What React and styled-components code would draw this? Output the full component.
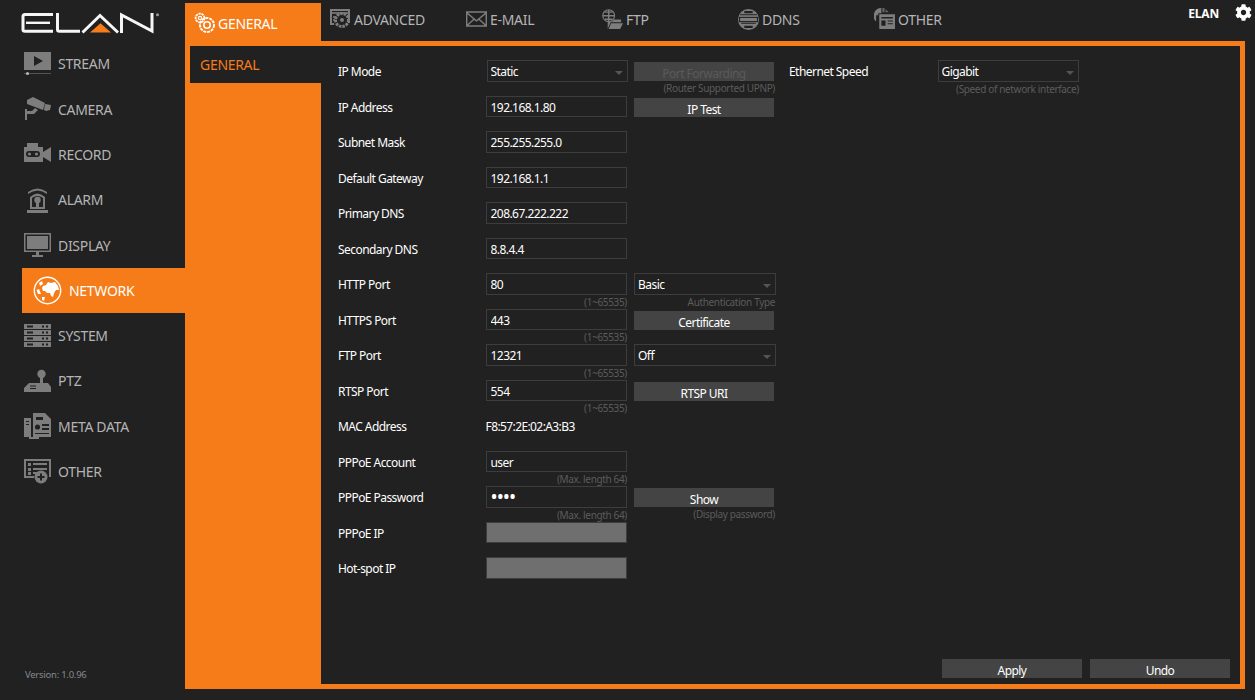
import React from 'react'
import styled, { createGlobalStyle } from 'styled-components'
import { FaCog } from 'react-icons/fa'

const ORANGE = '#f57c18'
const DARK = '#212121'
const FONT = '"Noto Sans", "Open Sans", sans-serif'

const GlobalStyle = createGlobalStyle`
    html, body {
        margin: 0;
        height: 100%;
        background: ${DARK};
        font-family: ${FONT};
    }
    * {
        box-sizing: border-box;
    }
`

const Page = styled.div`
    display: flex;
    width: 1255px;
    height: 700px;
    overflow: hidden;
    background: ${DARK};
`

const Sidebar = styled.aside`
    display: flex;
    flex-direction: column;
    width: 185px;
    flex-shrink: 0;
`

const LogoBox = styled.div`
    height: 41.2px;
    padding: 11px 0 0 21px;
`

const NavItem = styled.div`
    display: flex;
    align-items: center;
    gap: 7px;
    height: 45.3px;
    margin-left: 22px;
    padding-left: ${props => props.$active ? '11px' : '2px'};
    background: ${props => props.$active ? ORANGE : 'transparent'};
    color: ${props => props.$active ? '#fff' : '#b4b4b4'};
    font-size: 14px;
    letter-spacing: -0.3px;
    white-space: nowrap;
`

const Version = styled.div`
    margin-top: auto;
    padding: 0 0 19px 25px;
    color: #85898e;
    font-size: 9.5px;
    letter-spacing: -0.25px;
`

const Main = styled.main`
    display: flex;
    flex-direction: column;
    flex: 1;
    min-width: 0;
`

const TabBar = styled.nav`
    display: flex;
    height: 41px;
    flex-shrink: 0;
`

const Tab = styled.div`
    display: flex;
    align-items: center;
    gap: 3px;
    width: 136px;
    height: 38px;
    margin-top: ${props => props.$active ? '3px' : '0'};
    padding-left: 9px;
    padding-top: ${props => props.$active ? '2px' : '0'};
    background: ${props => props.$active ? ORANGE : 'transparent'};
    color: ${props => props.$active ? '#fff' : '#b4b4b4'};
    font-size: 14px;
    letter-spacing: -0.3px;
`

const UserBox = styled.div`
    display: flex;
    align-items: flex-start;
    gap: 16px;
    margin-left: auto;
    padding: 4px 3px 0 0;
    color: #fff;
`

const UserName = styled.span`
    margin-top: 1px;
    font-size: 12px;
    font-weight: 700;
    letter-spacing: -0.2px;
`

const Frame = styled.section`
    display: flex;
    flex: 1;
    margin: 0 10px 11px 0;
    padding: 5px;
    background: ${ORANGE};
    min-height: 0;
`

const SubNav = styled.div`
    width: 131px;
    flex-shrink: 0;
`

const SubNavItem = styled.div`
    height: 37px;
    padding: 9px 0 0 10px;
    background: ${DARK};
    color: ${ORANGE};
    font-size: 14px;
    letter-spacing: -0.3px;
`

const Content = styled.div`
    display: flex;
    flex-direction: column;
    flex: 1;
    background: ${DARK};
    padding: 14px 10px 6px 17px;
`

const Columns = styled.div`
    display: flex;
    gap: 14px;
    flex: 1;
`

const Rows = styled.div`
    display: flex;
    flex-direction: column;
`

const Row = styled.div`
    display: grid;
    grid-template-columns: ${props => props.$short ? '148.5px 141.5px' : '140.5px 141.5px 141px'};
    column-gap: ${props => props.$short ? '0' : '7px'};
    height: 35.5px;
`

const Label = styled.label`
    padding-top: 2px;
    color: #fff;
    font-size: 12px;
    line-height: 19px;
    letter-spacing: -0.55px;
    white-space: nowrap;
`

const Cell = styled.div`
    display: flex;
    flex-direction: column;
    min-width: 0;
`

const Input = styled.input`
    display: block;
    width: 141.5px;
    height: 21.5px;
    padding: 2px 4px 0;
    border: 1px solid #3d3d3d;
    border-radius: 0;
    outline: none;
    background: ${props => props.disabled ? '#6f6f6f' : DARK};
    color: #fff;
    font-family: ${FONT};
    font-size: 12px;
    letter-spacing: -0.55px;

    &[type='password'] {
        padding-top: 0;
        font-size: 19px;
        letter-spacing: -1px;
    }
`

const SelectWrap = styled.div`
    position: relative;
    width: 141.5px;
    height: 21.5px;
    margin-left: ${props => props.$shift ? '1px' : '0'};

    &::after {
        content: '';
        position: absolute;
        right: 5px;
        top: 11px;
        border-left: 4px solid transparent;
        border-right: 4px solid transparent;
        border-top: 4px solid #555;
    }
`

const Select = styled.select`
    display: block;
    appearance: none;
    width: 100%;
    height: 100%;
    padding: 2px 0 0 3px;
    border: 1px solid #3d3d3d;
    border-radius: 0;
    outline: none;
    background: ${DARK};
    color: #fff;
    font-family: ${FONT};
    font-size: 12px;
    letter-spacing: -0.55px;
`

const Hint = styled.span`
    align-self: flex-end;
    color: #5c5c5c;
    font-size: 10px;
    line-height: 14px;
    letter-spacing: -0.35px;
    white-space: nowrap;
`

const Value = styled.span`
    padding-top: 2px;
    color: #fff;
    font-size: 12px;
    line-height: 19px;
    letter-spacing: -0.6px;
`

const Button = styled.button`
    width: 140px;
    height: 19px;
    flex-shrink: 0;
    padding: 4px 0 0;
    border: none;
    background: #444;
    color: ${props => props.disabled ? '#5a5a5a' : '#fff'};
    font-family: ${FONT};
    font-size: 12px;
    line-height: 16px;
    letter-spacing: -0.55px;
`

const ActionButton = styled(Button)`
    margin-top: 2px;
`

const Footer = styled.div`
    display: flex;
    justify-content: flex-end;
    gap: 8px;
`

const Ico = ({ w = 27, h = 24, vb, children, color = '#7d7d7d' }) => (
    <svg width={w} height={h} viewBox={vb || `0 0 ${w} ${h}`} fill={color} stroke="none" style={{ flexShrink: 0 }}>
        {children}
    </svg>
)

const Logo = () => (
    <svg width="142" height="24" viewBox="0 0 142 24" role="img" aria-label="ELAN logo">
        <g fill="none" stroke="#f6f6f6" strokeWidth="3">
            <path d="M32 3.5H4Q2 3.5 2 5.5V18.5Q2 20.3 4 20.3H32" />
            <path d="M5 11.8H29" strokeWidth="2.4" />
            <path d="M36.5 2V18.5Q36.5 20.3 38.5 20.3H59" />
            <path d="M61.5 21.5L79 4.5 97 21.5" />
            <path d="M100.5 22V4L131 20V2" />
        </g>
        <path d="M69 21.5L79.5 12.3 90 21.5Z" fill={ORANGE} />
        <circle cx="136.5" cy="3.7" r="1.5" fill="#999" />
    </svg>
)

const StreamIcon = () => (
    <Ico>
        <path fillRule="evenodd" d="M0 0H27V18H0ZM10 4V14L19 9Z" />
        <path d="M0 21H27V22H0Z" opacity=".55" />
        <circle cx="3.5" cy="21.5" r="1.5" fill="#bbb" />
    </Ico>
)

const CameraIcon = () => (
    <Ico>
        <path d="M3 3L9 0 21 6 19 13 3 7Z" />
        <path d="M21 7L27 8 26 13 22 14 20 13Z" />
        <path d="M11 11L8 14H3V12H1V23H3V17H10L14 13Z" />
    </Ico>
)

const RecordIcon = () => (
    <Ico>
        <path fillRule="evenodd" d="M3 1H14V5H19V10L27 5V20L19 15V20H0V5H3ZM5 9A3 3 0 0 0 5 15H13A3 3 0 0 0 13 9Z" />
        <circle cx="5.5" cy="12" r="1.6" />
        <circle cx="12.5" cy="12" r="1.6" />
    </Ico>
)

const AlarmIcon = () => (
    <Ico h={26}>
        <path d="M4 5Q13.5 -2 23 5V7Q13.5 0 4 7Z" />
        <path fillRule="evenodd" d="M6 10Q13.5 3 21 10V22H6ZM8 20H19V11Q13.5 7 8 11Z" />
        <circle cx="13.5" cy="13" r="3.2" />
        <path d="M12 15H15V20H12Z" />
        <path d="M3 23H24V26H3Z" />
    </Ico>
)

const DisplayIcon = () => (
    <Ico h={25}>
        <path fillRule="evenodd" d="M0 0H27V19H0ZM1.5 1.5V17.5H25.5V1.5Z" />
        <path d="M3 3H24V16H3Z" />
        <path d="M12 19H15V22H19V24H8V22H12Z" />
    </Ico>
)

const GlobeIcon = () => (
    <Ico w={29} h={29} color="#fff">
        <circle cx="14.5" cy="14.5" r="13.2" fill="none" stroke="#fff" strokeWidth="1.4" />
        <path d="M10 10L13 9 15 6 18 7 22 6 25 10 26 14 23 14 21 17 20 21 18 20 17 17 14 17 12 15 10 15 9 12Z" />
        <path d="M6 7L9 5 10 8 7 10ZM3.5 14L6 13 8 18 5 18ZM9 21L12 21 11 25 9 24Z" />
    </Ico>
)

const SystemIcon = () => (
    <Ico>
        {[0, 6, 12, 18].map(y => (
            <path key={y} fillRule="evenodd" d={`M0 ${y}H27V${y + 5}H0ZM3 ${y + 1.5}V${y + 3.5}H9V${y + 1.5}ZM18 ${y + 1.5}V${y + 3.5}H20V${y + 1.5}ZM22 ${y + 1.5}V${y + 3.5}H24V${y + 1.5}Z`} />
        ))}
    </Ico>
)

const PtzIcon = () => (
    <Ico>
        <circle cx="17.5" cy="5" r="4.2" />
        <path d="M16 8H19V17H16Z" />
        <path fillRule="evenodd" d="M5 14H24L27 18V23H0V19ZM6 16.5V17.5H12V16.5ZM6 19V20H12V19Z" />
    </Ico>
)

const MetaIcon = () => (
    <Ico h={26}>
        <path fillRule="evenodd" d="M9 0H21L27 6V24H9ZM12 4V7H19V4ZM18 11V13H25V11ZM18 15V17H25V15ZM11 20V21H25V20Z" />
        <circle cx="13.5" cy="14" r="2.6" fill="#212121" />
        <path fillRule="evenodd" d="M0 5H7V24H15V26H5V24H0ZM2 8V9H5V8ZM2 11V12H5V11Z" />
    </Ico>
)

const OtherIcon = () => (
    <Ico h={26}>
        <path fillRule="evenodd" d="M0 0H27V18H25V2H2V17H10V19H0Z" />
        <path d="M4 4H7V7H4ZM9 4H23V6H9ZM4 9H7V12H4ZM9 9H23V11H9ZM4 13H7V16H4ZM9 13H14V15H9Z" />
        <circle cx="17" cy="18" r="6.5" />
        <path d="M16 14.5H18V17H20.5V19H18V21.5H16V19H13.5V17H16Z" fill="#212121" />
    </Ico>
)

const GearsIcon = () => (
    <Ico w={21} h={22} vb="0 0 21 22" color="none">
        <g fill="none" stroke="#fff">
            <circle cx="6" cy="6" r="4.4" strokeWidth="1.8" strokeDasharray="2.4 .7" />
            <circle cx="6" cy="6" r="1.6" strokeWidth="1.2" />
            <circle cx="13" cy="13" r="7" strokeWidth="2" strokeDasharray="3 .9" />
            <circle cx="13" cy="13" r="3.2" strokeWidth="1.6" />
        </g>
    </Ico>
)

const AdvancedIcon = () => (
    <Ico w={21} h={20}>
        <path fillRule="evenodd" d="M0 0H20V2H2V14H4V16H0ZM20 2V14H18V2Z" />
        <path d="M2 3H19V5H2ZM3 7H5V9H3ZM3 10H5V12H3Z" opacity=".8" />
        <circle cx="12" cy="11" r="6.5" fill="none" stroke="#7d7d7d" strokeWidth="3" strokeDasharray="2.6 .9" />
        <circle cx="12" cy="11" r="2" />
    </Ico>
)

const MailIcon = () => (
    <Ico w={21} h={16} vb="0 0 22 16">
        <path fillRule="evenodd" d="M0 0H22V16H0ZM2 1.5L11 9 20 1.5ZM1.5 3V13.5L7.5 8ZM20.5 3L14.5 8 20.5 13.5ZM8.5 9L2.5 14.5H19.5L13.5 9 11 11Z" />
    </Ico>
)

const FtpIcon = () => (
    <Ico w={21} h={21} vb="0 0 22 22">
        <circle cx="7" cy="7" r="6.2" fill="none" stroke="#7d7d7d" strokeWidth="1.2" />
        <path d="M3 2.5H11V4H3ZM1 6.2H13V7.8H1ZM3 10H11V11.5H3ZM6.2 1H7.8V13H6.2Z" />
        <path d="M6 13H11L12.5 11H20V14H9L6 21ZM9.5 15H22L19 21H7Z" />
    </Ico>
)

const DdnsIcon = () => (
    <Ico w={21} h={21} vb="0 0 20 20">
        <path fillRule="evenodd" d="M10 0A10 10 0 1 0 10 20 10 10 0 1 0 10 0ZM6 2H14V4H6ZM2 5H18V6H2ZM3 13H17V14H3ZM6 16H14V18H6Z" />
        <path d="M1 7.5H19V12.5H1Z" fill="#212121" />
        <path d="M2 8.5H18V11.5H2Z" />
    </Ico>
)

const OtherTabIcon = () => (
    <Ico w={21} h={22} vb="0 0 20 21">
        <path fillRule="evenodd" d="M7 0A7.5 7.5 0 0 0 2 13V7H4V5H7V0Z" />
        <path d="M8 0H10V4H8ZM11 1L14 4H11Z" opacity=".75" />
        <path fillRule="evenodd" d="M5 6H20V20H5ZM7 8.5V10H18V8.5ZM7 12V17H11V12ZM13 12V13H18V12ZM13 14.5V15.5H18V14.5Z" />
    </Ico>
)

const navItems = [
    ['STREAM', StreamIcon],
    ['CAMERA', CameraIcon],
    ['RECORD', RecordIcon],
    ['ALARM', AlarmIcon],
    ['DISPLAY', DisplayIcon],
    ['NETWORK', GlobeIcon, true],
    ['SYSTEM', SystemIcon],
    ['PTZ', PtzIcon],
    ['META DATA', MetaIcon],
    ['OTHER', OtherIcon],
]

const tabs = [
    ['GENERAL', GearsIcon, true],
    ['ADVANCED', AdvancedIcon],
    ['E-MAIL', MailIcon],
    ['FTP', FtpIcon],
    ['DDNS', DdnsIcon],
    ['OTHER', OtherTabIcon],
]

const PortField = ({ value, hint = '(1~65535)' }) => (
    <Cell>
        <Input readOnly value={value} />
        <Hint>{hint}</Hint>
    </Cell>
)

const Dropdown = ({ value, shift }) => (
    <SelectWrap $shift={shift}>
        <Select value={value} onChange={() => {}}>
            <option>{value}</option>
        </Select>
    </SelectWrap>
)

const App = () => (
    <Page>
        <GlobalStyle />
        <Sidebar>
            <LogoBox><Logo /></LogoBox>
            {navItems.map(([name, Icon, active]) => (
                <NavItem key={name} $active={active}>
                    <Icon />
                    {name}
                </NavItem>
            ))}
            <Version>Version: 1.0.96</Version>
        </Sidebar>
        <Main>
            <TabBar>
                {tabs.map(([name, Icon, active]) => (
                    <Tab key={name} $active={active}>
                        <Icon />
                        {name}
                    </Tab>
                ))}
                <UserBox>
                    <UserName>ELAN</UserName>
                    <FaCog size={17} />
                </UserBox>
            </TabBar>
            <Frame>
                <SubNav>
                    <SubNavItem>GENERAL</SubNavItem>
                </SubNav>
                <Content>
                    <Columns>
                        <Rows>
                            <Row>
                                <Label>IP Mode</Label>
                                <Cell><Dropdown value="Static" shift /></Cell>
                                <Cell>
                                    <ActionButton disabled>Port Forwarding</ActionButton>
                                    <Hint>(Router Supported UPNP)</Hint>
                                </Cell>
                            </Row>
                            <Row>
                                <Label>IP Address</Label>
                                <Cell><Input readOnly value="192.168.1.80" /></Cell>
                                <Cell><ActionButton>IP Test</ActionButton></Cell>
                            </Row>
                            <Row>
                                <Label>Subnet Mask</Label>
                                <Cell><Input readOnly value="255.255.255.0" /></Cell>
                            </Row>
                            <Row>
                                <Label>Default Gateway</Label>
                                <Cell><Input readOnly value="192.168.1.1" /></Cell>
                            </Row>
                            <Row>
                                <Label>Primary DNS</Label>
                                <Cell><Input readOnly value="208.67.222.222" /></Cell>
                            </Row>
                            <Row>
                                <Label>Secondary DNS</Label>
                                <Cell><Input readOnly value="8.8.4.4" /></Cell>
                            </Row>
                            <Row>
                                <Label>HTTP Port</Label>
                                <PortField value="80" />
                                <Cell>
                                    <Dropdown value="Basic" />
                                    <Hint>Authentication Type</Hint>
                                </Cell>
                            </Row>
                            <Row>
                                <Label>HTTPS Port</Label>
                                <PortField value="443" />
                                <Cell><ActionButton>Certificate</ActionButton></Cell>
                            </Row>
                            <Row>
                                <Label>FTP Port</Label>
                                <PortField value="12321" />
                                <Cell><Dropdown value="Off" /></Cell>
                            </Row>
                            <Row>
                                <Label>RTSP Port</Label>
                                <PortField value="554" />
                                <Cell><ActionButton>RTSP URI</ActionButton></Cell>
                            </Row>
                            <Row>
                                <Label>MAC Address</Label>
                                <Value>F8:57:2E:02:A3:B3</Value>
                            </Row>
                            <Row>
                                <Label>PPPoE Account</Label>
                                <PortField value="user" hint="(Max. length 64)" />
                            </Row>
                            <Row>
                                <Label>PPPoE Password</Label>
                                <Cell>
                                    <Input readOnly type="password" value="user" />
                                    <Hint>(Max. length 64)</Hint>
                                </Cell>
                                <Cell>
                                    <ActionButton>Show</ActionButton>
                                    <Hint>(Display password)</Hint>
                                </Cell>
                            </Row>
                            <Row>
                                <Label>PPPoE IP</Label>
                                <Cell><Input disabled /></Cell>
                            </Row>
                            <Row>
                                <Label>Hot-spot IP</Label>
                                <Cell><Input disabled /></Cell>
                            </Row>
                        </Rows>
                        <Rows>
                            <Row $short>
                                <Label>Ethernet Speed</Label>
                                <Cell>
                                    <Dropdown value="Gigabit" />
                                    <Hint>(Speed of network interface)</Hint>
                                </Cell>
                            </Row>
                        </Rows>
                    </Columns>
                    <Footer>
                        <Button>Apply</Button>
                        <Button>Undo</Button>
                    </Footer>
                </Content>
            </Frame>
        </Main>
    </Page>
)

export default App
